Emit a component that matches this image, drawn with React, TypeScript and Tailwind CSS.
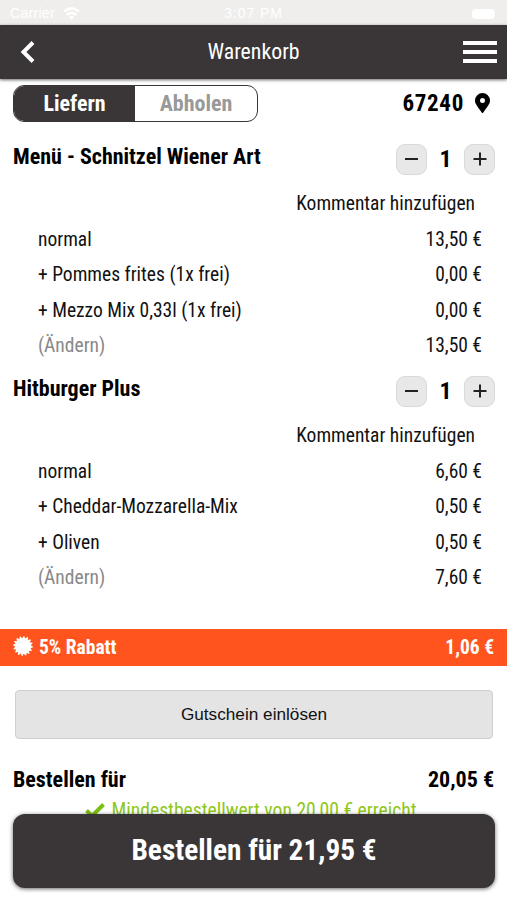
import React, { useState } from 'react';

interface Extra {
  label: string;
  price: string;
  muted?: boolean;
}

interface Product {
  name: string;
  extras: Extra[];
}

const products: Product[] = [
  {
    name: 'Menü - Schnitzel Wiener Art',
    extras: [
      { label: 'normal', price: '13,50 €' },
      { label: '+ Pommes frites (1x frei)', price: '0,00 €' },
      { label: '+ Mezzo Mix 0,33l (1x frei)', price: '0,00 €' },
      { label: '(Ändern)', price: '13,50 €', muted: true },
    ],
  },
  {
    name: 'Hitburger Plus',
    extras: [
      { label: 'normal', price: '6,60 €' },
      { label: '+ Cheddar-Mozzarella-Mix', price: '0,50 €' },
      { label: '+ Oliven', price: '0,50 €' },
      { label: '(Ändern)', price: '7,60 €', muted: true },
    ],
  },
];

const STEP_BUTTON =
  'flex h-[31px] w-[31px] items-center justify-center rounded-[9px] border border-[#d9d9d9] bg-[#e8e8e8]';

// Badge with 16 flat teeth in front of the discount
const badgePoints = Array.from({ length: 64 }, (_, i) => {
  const radius = i % 4 < 2 ? 9.9 : 8.1;
  const angle = ((i + 0.5) * Math.PI) / 32;
  return `${(10 + radius * Math.cos(angle)).toFixed(2)},${(10 + radius * Math.sin(angle)).toFixed(2)}`;
}).join(' ');

const StatusBar: React.FC = () => (
  <div className="flex h-[25px] items-center justify-between bg-[#f0eeec] pt-0.5 pr-3 pl-2.5 font-['Liberation_Sans',sans-serif] text-[14px] text-white font-stretch-normal">
    <div className="flex w-24 items-center gap-2">
      <span className="tracking-[0.3px]">Carrier</span>
      <svg width="17" height="13" viewBox="0 0 17 13" fill="none" stroke="white" strokeWidth="2.4">
        <path d="M1 4.5Q8.5 -2 16 4.5M3.8 8Q8.5 4 13.2 8" />
        <path d="M6 10 8.5 12.5 11 10Q8.5 8 6 10Z" fill="white" stroke="none" />
      </svg>
    </div>
    <span className="pl-0.5 tracking-[0.9px]">3:07 PM</span>
    <div className="flex w-24 justify-end">
      <div className="h-2.5 w-[23px] rounded-sm bg-white" />
    </div>
  </div>
);

const Header: React.FC = () => (
  <header className="flex h-[54px] items-center justify-between bg-[#3a3637] pr-[10px] pl-5 text-white shadow-[0_1px_3px_rgba(0,0,0,0.6)]">
    <svg className="mr-[9px]" width="15" height="22" viewBox="0 0 15 22" fill="none" stroke="white" strokeWidth="4">
      <path d="M13 1.5 3.5 11 13 20.5" />
    </svg>
    <h1 className="text-[21.8px]">Warenkorb</h1>
    <div className="flex w-[34px] flex-col gap-[5px]">
      <div className="h-1 bg-white" />
      <div className="h-1 bg-white" />
      <div className="h-1 bg-white" />
    </div>
  </header>
);

const ProductItem: React.FC<{ product: Product }> = ({ product }) => {
  const [amount, setAmount] = useState<number>(1);

  return (
    <section className="h-[232px]">
      <div className="flex h-[52px] items-center justify-between pr-3 pl-[13px]">
        <h2 className="pb-[5px] text-[22px] font-bold">{product.name}</h2>
        <div className="flex items-center">
          <button type="button" className={STEP_BUTTON} onClick={() => setAmount(Math.max(0, amount - 1))}>
            <div className="h-0.5 w-[13px] bg-[#222]" />
          </button>
          <span className="w-[37px] text-center text-[24px] font-bold">{amount}</span>
          <button type="button" className={STEP_BUTTON} onClick={() => setAmount(amount + 1)}>
            <svg width="14" height="14" viewBox="0 0 14 14" stroke="#222" strokeWidth="2">
              <path d="M7 0.5V13.5M0.5 7H13.5" />
            </svg>
          </button>
        </div>
      </div>
      <div className="flex h-[36px] items-center justify-end pt-0.5 pr-8 text-[19.5px] text-[#111]">
        <span>Kommentar hinzufügen</span>
      </div>
      {product.extras.map((extra) => (
        <div
          key={extra.label}
          className="flex h-[35.4px] items-center justify-between pt-[1.5px] pr-[25px] pl-[38px] text-[19.5px] text-[#111]"
        >
          <span className={extra.muted ? 'text-[#888]' : ''}>{extra.label}</span>
          <span>{extra.price}</span>
        </div>
      ))}
    </section>
  );
};

const App: React.FC = () => (
  <div className="relative h-[900px] w-[507px] overflow-hidden bg-white font-['Roboto_Condensed','Roboto',sans-serif] whitespace-nowrap text-black font-stretch-condensed">
    <StatusBar />
    <Header />

    <div className="flex h-[54px] items-center justify-between pr-[17px] pb-[5px] pl-[13px] font-bold">
      <div className="flex h-[37px] w-[245px] overflow-hidden rounded-[11px] border border-[#3a3637] text-[22px]">
        <button type="button" className="w-[121px] bg-[#3a3637] text-white">
          Liefern
        </button>
        <button type="button" className="flex-1 text-[#999]">
          Abholen
        </button>
      </div>
      <div className="flex items-center gap-[11px]">
        <span className="pt-0.5 text-[23px] tracking-[0.7px]">67240</span>
        <svg className="mb-0.5" width="15" height="20" viewBox="0 0 384 512" fill="black">
          <path d="M172 502C27 291 0 270 0 192a192 192 0 1 1 384 0c0 78-27 99-172 310a24 24 0 0 1-40 0zM192 256a64 64 0 1 0 0-128 64 64 0 0 0 0 128z" />
        </svg>
      </div>
    </div>

    {products.map((product) => (
      <ProductItem key={product.name} product={product} />
    ))}

    <div className="mt-8 flex h-[37px] items-center justify-between bg-[#ff541d] pr-[13px] pl-[13px] text-[19.5px] font-bold text-white">
      <div className="flex items-center gap-1.5">
        <svg className="mb-1" width="20" height="20" viewBox="0 0 20 20" fill="white">
          <polygon points={badgePoints} />
        </svg>
        <span>5% Rabatt</span>
      </div>
      <span>1,06 €</span>
    </div>

    <button
      type="button"
      className="mt-6 ml-[15px] block h-[49px] w-[478px] rounded border border-[#cfcfcf] bg-[#e4e4e4] font-['Liberation_Sans',sans-serif] text-[17.2px] text-[#111]"
    >
      Gutschein einlösen
    </button>

    <div className="mt-[22px] flex h-9 items-center justify-between pr-[13px] pl-[13px] text-[22px] font-bold">
      <span>Bestellen für</span>
      <span>20,05 €</span>
    </div>
    <div className="flex h-[27px] items-center justify-center gap-1.5 pr-[5px] text-[19.6px] text-[#8fc71c]">
      <svg width="20" height="16" viewBox="0 0 20 16" fill="none" stroke="#7cbf12" strokeWidth="4">
        <path d="M1.5 7.5 7 13 18.5 1.5" />
      </svg>
      <span>Mindestbestellwert von 20,00 € erreicht</span>
    </div>

    <button
      type="button"
      className="absolute top-[814px] left-[13px] h-[74px] w-[482px] rounded-xl bg-[#3a3637] text-[29.3px] font-bold text-white shadow-[0_1px_4px_rgba(0,0,0,0.6)]"
    >
      Bestellen für 21,95 €
    </button>
  </div>
);

export default App;
